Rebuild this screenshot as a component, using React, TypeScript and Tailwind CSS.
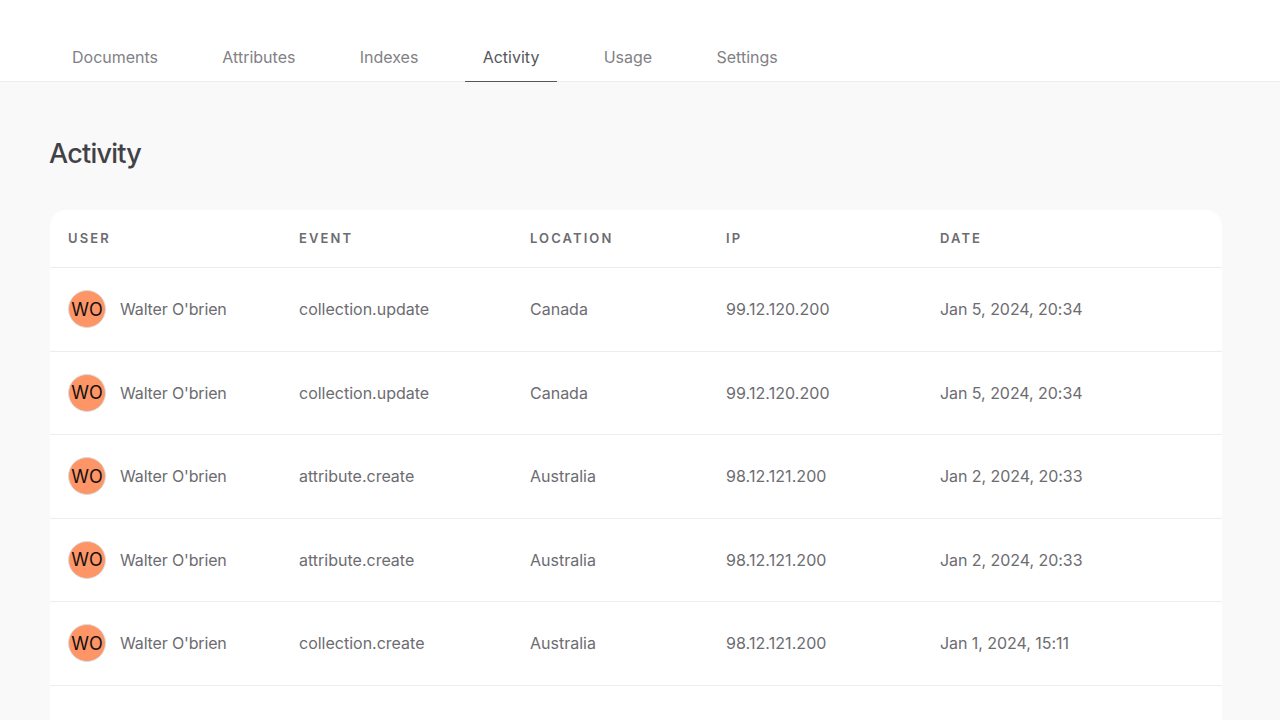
const tabs = ['Documents', 'Attributes', 'Indexes', 'Activity', 'Usage', 'Settings'];

const rows = [
  { event: 'collection.update', location: 'Canada', ip: '99.12.120.200', date: 'Jan 5, 2024, 20:34' },
  { event: 'collection.update', location: 'Canada', ip: '99.12.120.200', date: 'Jan 5, 2024, 20:34' },
  { event: 'attribute.create', location: 'Australia', ip: '98.12.121.200', date: 'Jan 2, 2024, 20:33' },
  { event: 'attribute.create', location: 'Australia', ip: '98.12.121.200', date: 'Jan 2, 2024, 20:33' },
  { event: 'collection.create', location: 'Australia', ip: '98.12.121.200', date: 'Jan 1, 2024, 15:11' },
];

const columns = 'grid grid-cols-[231px_231px_196px_214px_1fr] items-center pl-[18px]';

export default function App() {
  return (
    <div className="h-[720px] overflow-hidden bg-[#f9f9f9] font-['Inter',sans-serif]">
      <nav className="flex h-[82px] items-end gap-[28.3px] border-b border-[#ededf0] bg-white pl-[54px]">
        {tabs.map((tab) => (
          <a
            key={tab}
            className={
              tab === 'Activity'
                ? '-mb-px border-b border-[#56565c] px-[18px] pb-[14px] text-[16px] leading-[20px] text-[#56565c]'
                : 'px-[18px] pb-[14px] text-[16px] leading-[20px] text-[#818186]'
            }
          >
            {tab}
          </a>
        ))}
      </nav>

      <main className="pr-[58px] pl-[50px]">
        <h1 className="-ml-px pt-[54px] text-[27px] leading-[36px] font-medium tracking-[-0.75px] text-[#414146]">
          Activity
        </h1>

        <div className="mt-[38px] rounded-t-[16px] bg-white pb-10">
          <div className={`${columns} h-[58px] border-b border-[#ededf0] text-[13px] font-semibold tracking-[2.1px] text-[#6c6c71]`}>
            <span>USER</span>
            <span>EVENT</span>
            <span>LOCATION</span>
            <span>IP</span>
            <span>DATE</span>
          </div>
          {rows.map((row, i) => (
            <div
              key={i}
              className={`${columns} h-[83.5px] border-b border-[#ededf0] text-[16px] text-[#6c6c71]`}
            >
              <div className="flex items-center gap-[14px]">
                <div className="flex h-[38px] w-[38px] items-center justify-center rounded-full border border-[#dcdcdc] bg-[#fe9567] text-[18px] text-[#111]">
                  WO
                </div>
                <span className="tracking-[-0.15px]">Walter O'brien</span>
              </div>
              <span>{row.event}</span>
              <span>{row.location}</span>
              <span className="tracking-[0.08px]">{row.ip}</span>
              <span className="tracking-[-0.05px]">{row.date}</span>
            </div>
          ))}
        </div>
      </main>
    </div>
  );
}
